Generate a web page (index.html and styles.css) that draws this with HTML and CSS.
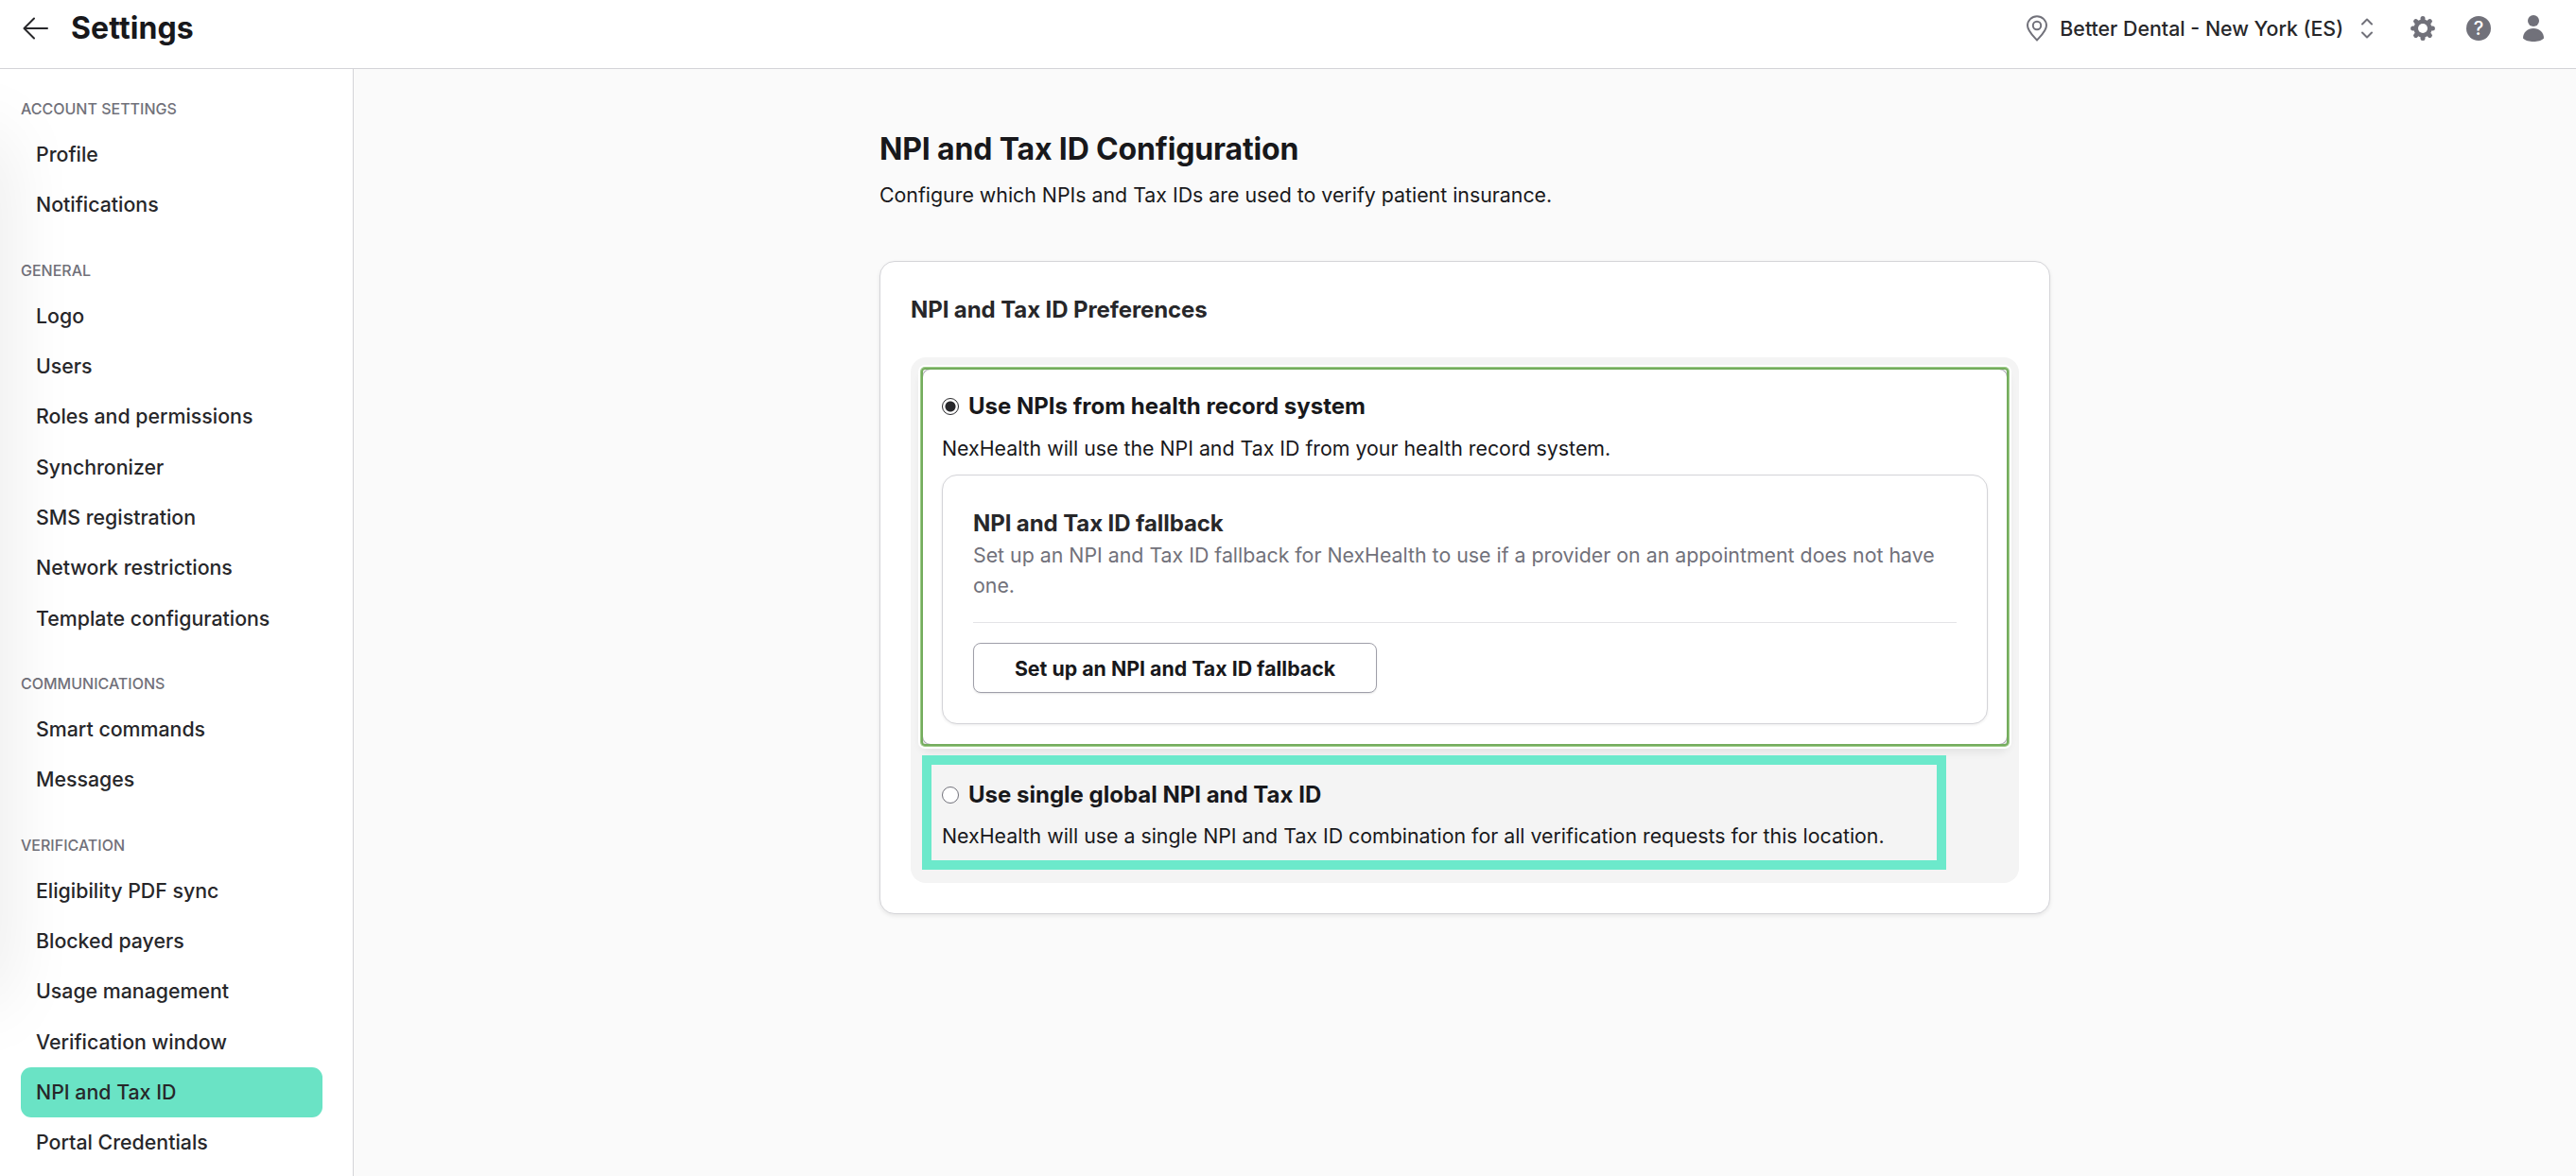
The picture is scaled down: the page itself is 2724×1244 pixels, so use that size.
FILE: index.html
```html
<!DOCTYPE html>
<html lang="en">
<head>
  <meta charset="UTF-8" />
  <meta name="viewport" content="width=device-width, initial-scale=1.0"/>
  <title>Settings - NPI and Tax ID</title>
  <link rel="stylesheet" href="styles.css">
</head>
<body>

  <header class="topbar">
    <a class="back" href="#" aria-label="Back">
      <svg width="28" height="24" viewBox="0 0 28 24"><path d="M26 12H2M12 1.5L1.5 12 12 22.5"/></svg>
    </a>
    <h1 class="topbar-title">Settings</h1>
    <div class="location">
      <svg class="pin" width="24" height="28" viewBox="0 0 24 28"><path d="M12 26.500C9.500 23.500 2 17 2 11a10 9.700 0 0 1 20 0c0 6-7.500 12.500-10 15.500z"/><circle cx="12" cy="11" r="4.200"/></svg>
      <span class="location-name">Better Dental - New York (ES)</span>
      <svg class="updown" width="14" height="22" viewBox="0 0 14 22"><path d="M2 6.500L7 1.500 12 6.500M2 15.500L7 20.500 12 15.500"/></svg>
    </div>
    <div class="topbar-icons">
      <svg class="gear" width="26" height="26" viewBox="0 0 26 26"><circle cx="13" cy="13" r="9.600"/><path d="M13 2.600v20.800M2.600 13h20.800M5.600 5.600l14.800 14.800M20.400 5.600L5.600 20.400"/><circle class="gear-hole" cx="13" cy="13" r="5"/></svg>
      <span class="help">?</span>
      <svg width="24" height="28" viewBox="0 0 24 28"><circle cx="12" cy="6" r="6"/><path d="M1 24.500C1 18.500 5.500 14 12 14s11 4.500 11 10.500C21 27 16 28 12 28S3 27 1 24.500z"/></svg>
    </div>
  </header>

  <div class="layout">
    <nav class="sidebar">
      <h2 class="nav-title">ACCOUNT SETTINGS</h2>
      <ul class="nav-list">
        <li>Profile</li>
        <li>Notifications</li>
      </ul>
      <h2 class="nav-title">GENERAL</h2>
      <ul class="nav-list">
        <li>Logo</li>
        <li>Users</li>
        <li>Roles and permissions</li>
        <li>Synchronizer</li>
        <li>SMS registration</li>
        <li>Network restrictions</li>
        <li>Template configurations</li>
      </ul>
      <h2 class="nav-title">COMMUNICATIONS</h2>
      <ul class="nav-list">
        <li>Smart commands</li>
        <li>Messages</li>
      </ul>
      <h2 class="nav-title">VERIFICATION</h2>
      <ul class="nav-list">
        <li>Eligibility PDF sync</li>
        <li>Blocked payers</li>
        <li>Usage management</li>
        <li>Verification window</li>
        <li class="active">NPI and Tax ID</li>
        <li>Portal Credentials</li>
      </ul>
    </nav>

    <main class="content">
      <h2 class="page-title">NPI and Tax ID Configuration</h2>
      <p class="page-text">Configure which NPIs and Tax IDs are used to verify patient insurance.</p>

      <section class="card">
        <h3 class="card-title">NPI and Tax ID Preferences</h3>
        <div class="options">
          <div class="option selected">
            <label class="option-label"><span class="radio checked"></span>Use NPIs from health record system</label>
            <p class="option-text">NexHealth will use the NPI and Tax ID from your health record system.</p>
            <div class="fallback">
              <h4 class="fallback-title">NPI and Tax ID fallback</h4>
              <p class="fallback-text">Set up an NPI and Tax ID fallback for NexHealth to use if a provider on an appointment does not have one.</p>
              <button class="btn">Set up an NPI and Tax ID fallback</button>
            </div>
          </div>
          <div class="option global">
            <label class="option-label"><span class="radio"></span>Use single global NPI and Tax ID</label>
            <p class="option-text">NexHealth will use a single NPI and Tax ID combination for all verification requests for this location.</p>
          </div>
        </div>
      </section>
    </main>
  </div>

</body>
</html>
```

FILE: styles.css
```css
*,
*::before,
*::after {
  box-sizing: border-box;
  margin: 0;
  padding: 0;
}

body {
  height: 1244px;
  display: flex;
  flex-direction: column;
  font-family: Inter, sans-serif;
  font-size: 21.33px;
  line-height: 32px;
  color: #18181b;
  background: #fafafa;
  overflow: hidden;
}

/* top bar */
.topbar {
  display: flex;
  align-items: center;
  height: 73px;
  padding: 0 33px 13px 24px;
  background: #fff;
  border-bottom: 1px solid #d4d4d8;
}

.back {
  display: flex;
  margin-right: 23px;
}

.back svg,
.location svg {
  fill: none;
  stroke: #27272a;
  stroke-width: 2;
  stroke-linecap: round;
  stroke-linejoin: round;
}

.topbar-title {
  font-size: 32px;
  font-weight: 700;
  letter-spacing: 0.1px;
}

.location {
  display: flex;
  align-items: center;
  margin-left: auto;
}

.location svg {
  stroke: #71717a;
}

.location-name {
  margin: 0 18px 0 12px;
  font-weight: 500;
  color: #27272a;
}

.topbar-icons {
  display: flex;
  align-items: center;
  gap: 33px;
  margin-left: 39px;
}

.topbar-icons svg {
  fill: #71717a;
}

.topbar-icons .gear path {
  stroke: #71717a;
  stroke-width: 5;
  stroke-linecap: round;
}

.topbar-icons .gear-hole {
  fill: #fff;
}

.help {
  width: 26px;
  height: 26px;
  border-radius: 50%;
  background: #71717a;
  color: #fff;
  font-size: 20px;
  font-weight: 500;
  line-height: 26px;
  text-align: center;
}

.layout {
  flex: 1;
  display: flex;
  min-height: 0;
}

/* sidebar */
.sidebar {
  width: 374px;
  padding: 26px 32px 0 22px;
  background: #fff;
  border-right: 1px solid #d4d4d8;
}

/* soft shade along the left edge of the window */
.sidebar::before {
  content: "";
  position: fixed;
  top: 150px;
  left: -40px;
  width: 30px;
  height: 900px;
  box-shadow: 0 0 80px 6px rgba(0, 0, 0, 0.13);
  pointer-events: none;
}

.nav-title {
  font-size: 16px;
  font-weight: 500;
  line-height: 32px;
  color: #71717a;
}

.nav-list {
  margin: 6px 0 26px;
  list-style: none;
}

.nav-list li {
  height: 53.33px;
  padding: 0 16px;
  border-radius: 11px;
  line-height: 52px;
  font-weight: 500;
  color: #27272a;
}

.nav-list .active {
  background: #6ae3c5;
}

/* main */
.content {
  width: 1238px;
  margin: 63px auto 0;
}

.page-title {
  font-size: 32px;
  font-weight: 700;
  line-height: 43px;
  letter-spacing: -0.15px;
}

.page-text {
  margin-top: 11px;
}

.card {
  height: 691px;
  margin-top: 54px;
  padding: 35px 32px 0;
  background: #fff;
  border: 1px solid #d4d4d8;
  border-radius: 16px;
  box-shadow: 0 2px 4px rgba(0, 0, 0, 0.08);
}

.card-title {
  font-size: 24px;
  font-weight: 700;
  letter-spacing: -0.1px;
  color: #27272a;
}

.options {
  height: 556px;
  margin-top: 34px;
  padding: 12px 12px 0;
  border-radius: 16px;
  background: #f4f4f4;
}

.option {
  padding: 20px 21px 0;
}

.selected {
  position: relative;
  height: 398px;
  padding: 20px 20px 0;
  background: #fff;
  border: 1px solid #a1a1aa;
  border-radius: 9px;
  box-shadow: 0 6px 8px 2px rgba(0, 0, 0, 0.07);
}

/* focus ring */
.selected::before {
  content: "";
  position: absolute;
  inset: -2px;
  border: 2px solid #74ac5d;
  border-radius: 4px;
  box-shadow: 0 0 0 1px #9ccb88, 0 0 0 3px #fff;
}

.option-label {
  display: flex;
  align-items: center;
  gap: 10px;
  height: 37px;
  font-size: 24px;
  font-weight: 700;
}

.radio {
  width: 18px;
  height: 18px;
  border: 1px solid #71717a;
  border-radius: 50%;
  background: #fff;
}

.radio.checked {
  border-color: #27272a;
  background: radial-gradient(circle, #27272a 5px, #fff 6px);
}

.option-text {
  margin-top: 10px;
}

.fallback {
  height: 264px;
  margin-top: 12px;
  padding: 35px 32px 0;
  background: #fff;
  border: 1px solid #d4d4d8;
  border-radius: 16px;
  box-shadow: 0 1px 3px rgba(0, 0, 0, 0.08);
}

.fallback-title {
  font-size: 24px;
  font-weight: 700;
  letter-spacing: -0.1px;
  color: #27272a;
}

.fallback-text {
  margin-top: 1px;
  padding-bottom: 23px;
  color: #71717a;
  border-bottom: 1px solid #e4e4e7;
}

.btn {
  width: 427px;
  height: 53px;
  margin-top: 21px;
  background: #fff;
  border: 1px solid #9f9fa9;
  border-radius: 8px;
  box-shadow: 0 1px 2px rgba(0, 0, 0, 0.1);
  font-family: inherit;
  font-size: 21.33px;
  font-weight: 700;
  color: #18181b;
}

.global {
  position: relative;
  margin-top: 14px;
}

.global .option-text {
  margin-top: 9px;
}

/* highlight frame drawn over the second option */
.global::after {
  content: "";
  position: absolute;
  top: -3px;
  left: 0;
  width: 1083px;
  height: 121px;
  border: 10px solid #6ce9cb;
}
```
